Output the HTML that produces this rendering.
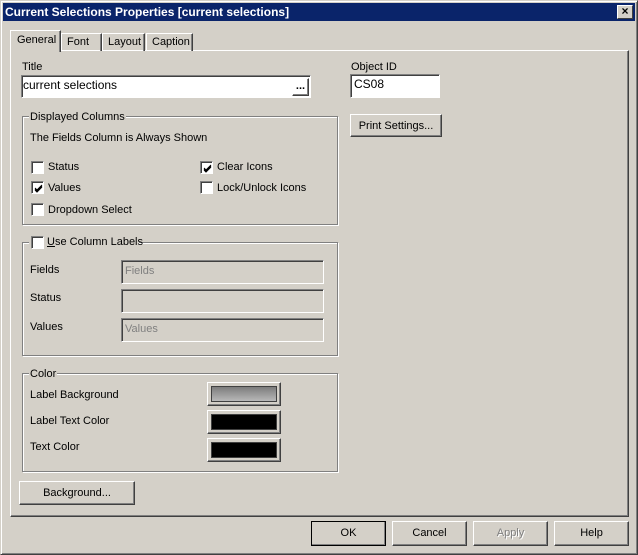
<!DOCTYPE html>
<html><head><style>
*{box-sizing:border-box;margin:0;padding:0}
body{width:638px;height:555px;background:#d4d0c8;font-family:"Liberation Sans",sans-serif;font-size:11px;color:#000;position:relative;overflow:hidden}
.a{position:absolute}
.t{margin-top:2px}
.out{left:0;top:0;width:638px;height:555px;border:1px solid;border-color:#d4d0c8 #404040 #404040 #d4d0c8;box-shadow:inset 1px 1px #fff,inset -1px -1px #808080}
.tb{left:3px;top:3px;width:632px;height:18px;background:#0a246a;color:#fff;font-weight:bold;font-size:12px;line-height:18px;padding-left:2px}
.close{right:5px;top:5px;width:16px;height:14px;background:#d4d0c8;border:1px solid;border-color:#fff #404040 #404040 #fff;font-size:12px;line-height:11px;text-align:center;font-weight:bold}
.panel{left:10px;top:50px;width:619px;height:467px;border:1px solid;border-color:#fff #404040 #404040 #fff;box-shadow:inset -1px -1px #808080}
.tab{top:33px;height:18px;border:1px solid;border-bottom:none;border-color:#fff #404040 #fff #fff;line-height:16px;padding-left:5px;font-size:11px;box-shadow:inset -1px 0 #808080}
.grp{border:1px solid #808080;box-shadow:1px 1px #fff,inset 1px 1px #fff}
.lg{background:#d4d0c8;padding:0 1px}
.in{background:#fff;border:1px solid;border-color:#808080 #fff #fff #808080;box-shadow:inset 1px 1px #404040;line-height:19px;padding-left:3px;font-size:12px}
.dis{background:#d4d0c8;color:#808080;line-height:20px;font-size:11px}
.btn{border:1px solid;border-color:#fff #404040 #404040 #fff;box-shadow:inset -1px -1px #808080;text-align:center;line-height:22px;font-size:11px}
.cb{width:13px;height:13px;background:#fff;border:1px solid;border-color:#808080 #fff #fff #808080;box-shadow:inset 1px 1px #404040}
.cb svg{position:absolute;left:2px;top:2px}
.sw{width:74px;height:24px;border:1px solid;border-color:#fff #404040 #404040 #fff;box-shadow:inset -1px -1px #808080;padding:3px}
.sw div{width:100%;height:100%;border:1px solid #404040}
</style></head><body>
<div class="a out"></div>
<div class="a tb">Current Selections Properties [current selections]</div>
<div class="a close">×</div>
<div class="a panel"></div>
<div class="a tab" style="left:61px;width:41px">Font</div>
<div class="a tab" style="left:102px;width:43px">Layout</div>
<div class="a tab" style="left:146px;width:47px">Caption</div>
<div class="a tab" style="left:10px;top:30px;height:22px;width:51px;background:#d4d0c8;border-color:#fff #404040 #d4d0c8 #fff;line-height:18px;padding-left:6px">General</div>

<div class="a t" style="left:22px;top:59px">Title</div>
<div class="a in" style="left:21px;top:75px;width:290px;height:23px;padding-left:1px">current selections</div>
<div class="a btn" style="left:292px;top:78px;width:17px;height:18px;line-height:14px;font-weight:bold">...</div>
<div class="a t" style="left:351px;top:59px">Object ID</div>
<div class="a in" style="left:350px;top:74px;width:90px;height:24px">CS08</div>
<div class="a btn" style="left:350px;top:114px;width:92px;height:23px">Print Settings...</div>

<div class="a grp" style="left:22px;top:116px;width:316px;height:109px"></div>
<div class="a lg t" style="left:29px;top:109px">Displayed Columns</div>
<div class="a t" style="left:30px;top:130px">The Fields Column is Always Shown</div>
<div class="a cb" style="left:31px;top:161px"></div><div class="a t" style="left:48px;top:159px">Status</div>
<div class="a cb" style="left:31px;top:181px"><svg width="9" height="9"><path d="M1 4l2 2 5-5M1 5l2 2 5-5M1 6l2 2 5-5" stroke="#000" fill="none"/></svg></div><div class="a t" style="left:48px;top:180px">Values</div>
<div class="a cb" style="left:31px;top:203px"></div><div class="a t" style="left:48px;top:202px">Dropdown Select</div>
<div class="a cb" style="left:200px;top:161px"><svg width="9" height="9"><path d="M1 4l2 2 5-5M1 5l2 2 5-5M1 6l2 2 5-5" stroke="#000" fill="none"/></svg></div><div class="a t" style="left:217px;top:159px">Clear Icons</div>
<div class="a cb" style="left:200px;top:181px"></div><div class="a t" style="left:217px;top:180px">Lock/Unlock Icons</div>

<div class="a grp" style="left:22px;top:242px;width:316px;height:114px"></div>
<div class="a lg" style="left:29px;top:235px;width:110px;height:14px"></div>
<div class="a cb" style="left:31px;top:236px"></div><div class="a t" style="left:47px;top:234px"><u>U</u>se Column Labels</div>
<div class="a t" style="left:30px;top:262px">Fields</div>
<div class="a in dis" style="left:121px;top:260px;width:203px;height:24px">Fields</div>
<div class="a t" style="left:30px;top:290px">Status</div>
<div class="a in dis" style="left:121px;top:289px;width:203px;height:24px"></div>
<div class="a t" style="left:30px;top:319px">Values</div>
<div class="a in dis" style="left:121px;top:318px;width:203px;height:24px">Values</div>

<div class="a grp" style="left:22px;top:373px;width:316px;height:99px"></div>
<div class="a lg t" style="left:29px;top:366px">Color</div>
<div class="a t" style="left:30px;top:387px">Label Background</div>
<div class="a sw" style="left:207px;top:382px"><div style="background:linear-gradient(#7c7c7c,#b8b8b8)"></div></div>
<div class="a t" style="left:30px;top:413px">Label Text Color</div>
<div class="a sw" style="left:207px;top:410px"><div style="background:#000"></div></div>
<div class="a t" style="left:30px;top:439px">Text Color</div>
<div class="a sw" style="left:207px;top:438px"><div style="background:#000"></div></div>

<div class="a btn" style="left:19px;top:481px;width:116px;height:24px">Background...</div>

<div class="a btn" style="left:311px;top:521px;width:75px;height:25px;outline:1px solid #000;outline-offset:-1px">OK</div>
<div class="a btn" style="left:392px;top:521px;width:75px;height:25px">Cancel</div>
<div class="a btn" style="left:473px;top:521px;width:75px;height:25px;color:#808080;text-shadow:1px 1px #fff">Apply</div>
<div class="a btn" style="left:554px;top:521px;width:75px;height:25px">Help</div>
</body></html>
